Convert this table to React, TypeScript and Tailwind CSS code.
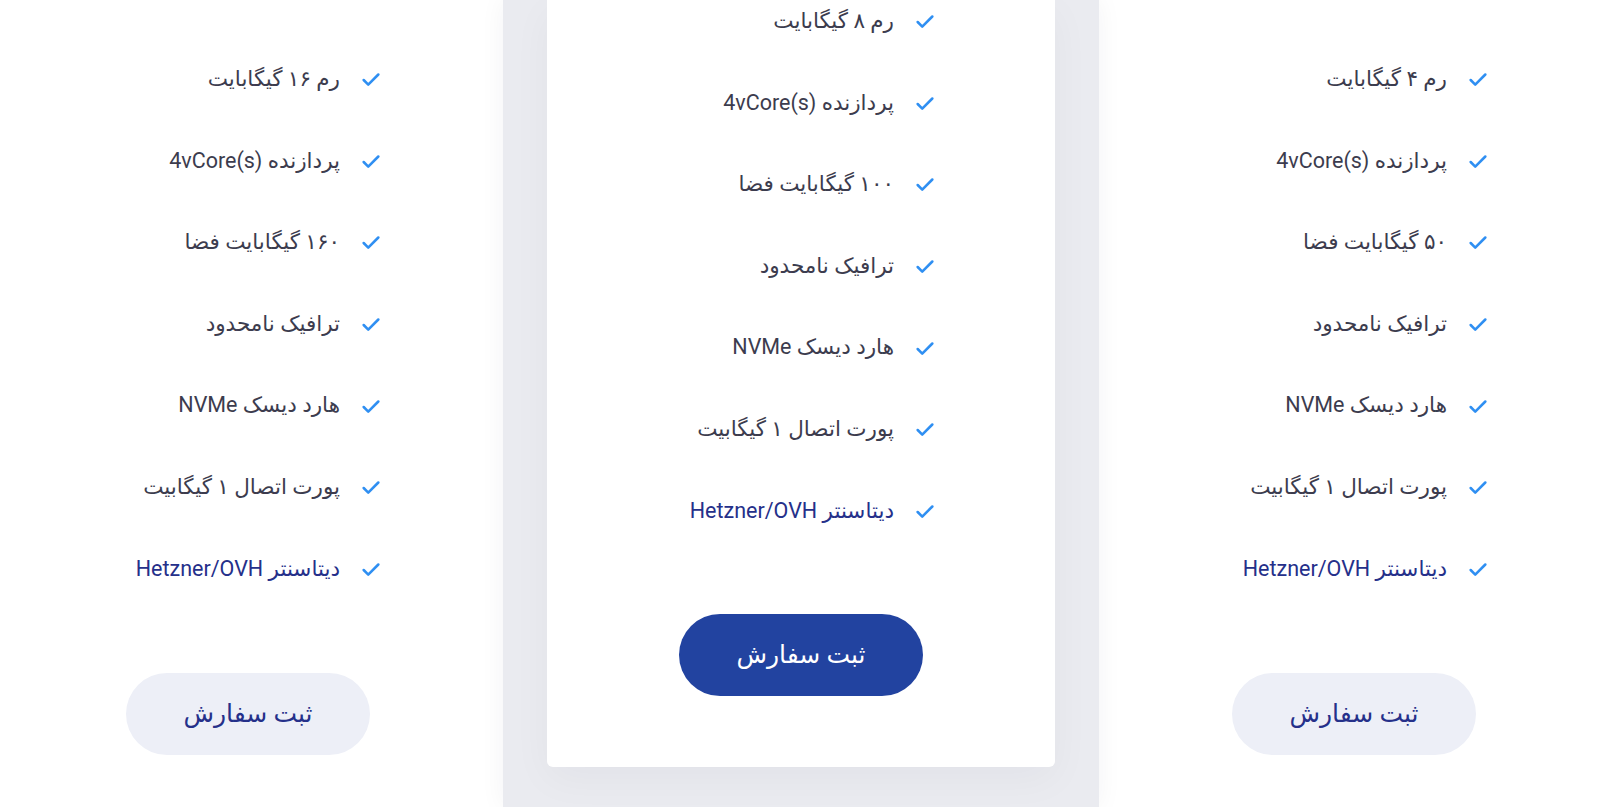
import { Check } from "lucide-react";

type Plan = { items: string[]; featured?: boolean };

const datacenter = "دیتاسنتر Hetzner/OVH";

const plans: Plan[] = [
  {
    items: [
      "رم ۱۶ گیگابایت",
      "پردازنده 4vCore(s)",
      "۱۶۰ گیگابایت فضا",
      "ترافیک نامحدود",
      "هارد دیسک NVMe",
      "پورت اتصال ۱ گیگابیت",
      datacenter,
    ],
  },
  {
    featured: true,
    items: [
      "رم ۸ گیگابایت",
      "پردازنده 4vCore(s)",
      "۱۰۰ گیگابایت فضا",
      "ترافیک نامحدود",
      "هارد دیسک NVMe",
      "پورت اتصال ۱ گیگابیت",
      datacenter,
    ],
  },
  {
    items: [
      "رم ۴ گیگابایت",
      "پردازنده 4vCore(s)",
      "۵۰ گیگابایت فضا",
      "ترافیک نامحدود",
      "هارد دیسک NVMe",
      "پورت اتصال ۱ گیگابیت",
      datacenter,
    ],
  },
];

function FeatureList({ items }: { items: string[] }) {
  return (
    <ul dir="rtl" className="flex flex-col">
      {items.map((item) => (
        <li key={item} className="flex items-center gap-[20px] h-[81.6px]">
          <Check size={22} strokeWidth={2.8} className="text-[#2f8ff2] flex-shrink-0 mt-[3px]" />
          <span
            className={`text-[21.5px] leading-none ${item === datacenter ? "text-[#25308a]" : "text-[#3c3c4e]"}`}
          >
            {item}
          </span>
        </li>
      ))}
    </ul>
  );
}

function OrderButton({ primary }: { primary?: boolean }) {
  return (
    <button
      className={`w-[244px] h-[82px] rounded-full text-[25px] ${
        primary ? "bg-[#2243a0] text-white" : "bg-[#edeff7] text-[#25308a]"
      }`}
    >
      ثبت سفارش
    </button>
  );
}

export default function App() {
  return (
    <div
      className="grid grid-cols-[503px_596px_501px] h-[807px] overflow-hidden bg-white"
      style={{ fontFamily: 'Roboto, "DejaVu Sans", sans-serif' }}
    >
      <div className="flex flex-col items-center pt-[38px] pr-[7px]">
        <div className="self-end pr-[114px]">
          <FeatureList items={plans[0].items} />
        </div>
        <div className="mt-[64px]">
          <OrderButton />
        </div>
      </div>

      <div className="bg-[#eaebf0] px-[44px] shadow-[0_0_24px_rgba(20,30,60,0.05)]">
        <div className="bg-white rounded-b-md flex flex-col items-center pb-[71px] shadow-[0_12px_40px_rgba(20,30,60,0.04)]">
          <div className="self-end mt-[-20px] pr-[119px]">
            <FeatureList items={plans[1].items} />
          </div>
          <div className="mt-[63px]">
            <OrderButton primary />
          </div>
        </div>
      </div>

      <div className="flex flex-col items-center pt-[38px] pl-[9px]">
        <div className="self-end pr-[111px]">
          <FeatureList items={plans[2].items} />
        </div>
        <div className="mt-[64px]">
          <OrderButton />
        </div>
      </div>
    </div>
  );
}
